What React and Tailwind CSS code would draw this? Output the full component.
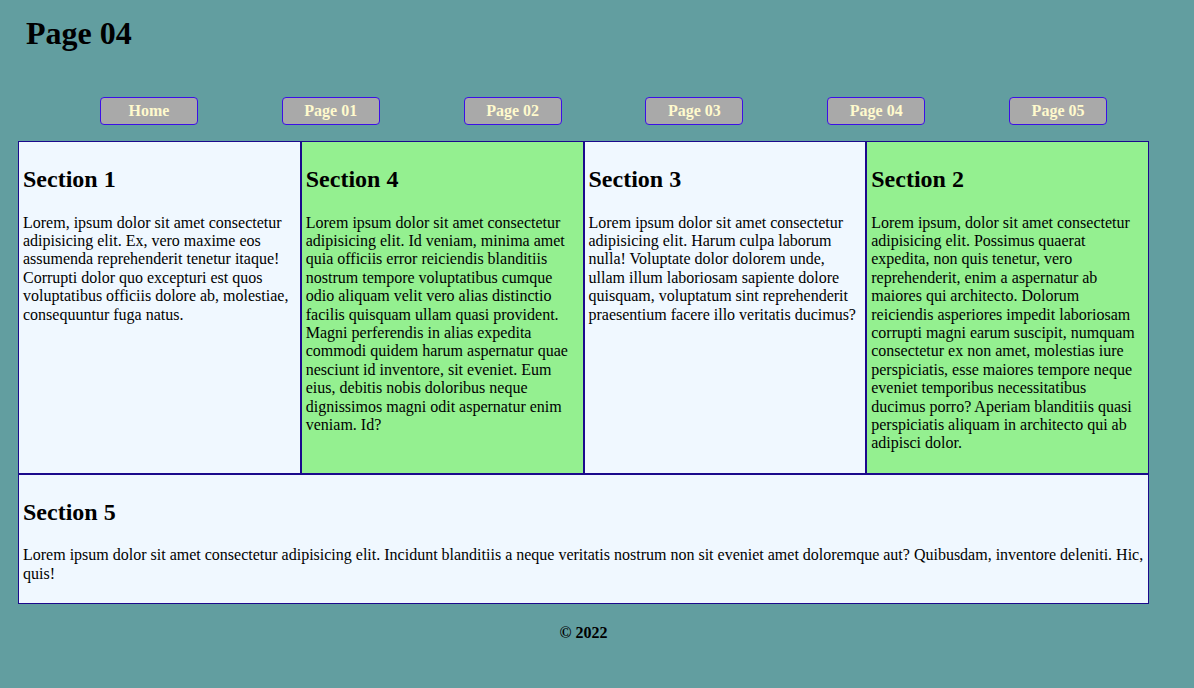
export default function App() {
  const navs = ["Home", "Page 01", "Page 02", "Page 03", "Page 04", "Page 05"];
  const cells = [
    {
      t: "Section 1",
      g: false,
      p: "Lorem, ipsum dolor sit amet consectetur adipisicing elit. Ex, vero maxime eos assumenda reprehenderit tenetur itaque! Corrupti dolor quo excepturi est quos voluptatibus officiis dolore ab, molestiae, consequuntur fuga natus.",
    },
    {
      t: "Section 4",
      g: true,
      p: "Lorem ipsum dolor sit amet consectetur adipisicing elit. Id veniam, minima amet quia officiis error reiciendis blanditiis nostrum tempore voluptatibus cumque odio aliquam velit vero alias distinctio facilis quisquam ullam quasi provident. Magni perferendis in alias expedita commodi quidem harum aspernatur quae nesciunt id inventore, sit eveniet. Eum eius, debitis nobis doloribus neque dignissimos magni odit aspernatur enim veniam. Id?",
    },
    {
      t: "Section 3",
      g: false,
      p: "Lorem ipsum dolor sit amet consectetur adipisicing elit. Harum culpa laborum nulla! Voluptate dolor dolorem unde, ullam illum laboriosam sapiente dolore quisquam, voluptatum sint reprehenderit praesentium facere illo veritatis ducimus?",
    },
    {
      t: "Section 2",
      g: true,
      p: "Lorem ipsum, dolor sit amet consectetur adipisicing elit. Possimus quaerat expedita, non quis tenetur, vero reprehenderit, enim a aspernatur ab maiores qui architecto. Dolorum reiciendis asperiores impedit laboriosam corrupti magni earum suscipit, numquam consectetur ex non amet, molestias iure perspiciatis, esse maiores tempore neque eveniet temporibus necessitatibus ducimus porro? Aperiam blanditiis quasi perspiciatis aliquam in architecto qui ab adipisci dolor.",
    },
  ];
  return (
    <div className="min-h-[688px] bg-[#629ea0] text-black font-['Liberation_Serif',serif] overflow-hidden">
      <h1 className="pt-[15px] pl-[26px] text-[32px] font-bold leading-[36px]">Page 04</h1>
      <nav className="mt-[46px] ml-[58px] w-[1091px] flex justify-around">
        {navs.map((n) => (
          <a
            key={n}
            className="h-[28px] w-[98px] flex items-center justify-center border border-[#3c0fe6] rounded-[4px] bg-[#a9a9a9] text-[#fffacd] text-[16px] font-bold leading-[18.4px]"
          >
            {n}
          </a>
        ))}
      </nav>
      <main className="mt-[16px] ml-[18px] w-[1131px] grid grid-cols-4">
        {cells.map((c) => (
          <section
            key={c.t}
            className={`border border-[#1b0a8c] p-1 ${c.g ? "bg-[#94f090]" : "bg-[#f0f8ff]"}`}
          >
            <h2 className="text-[24px] font-bold leading-[27.6px] my-[20px]">{c.t}</h2>
            <p className="text-[16px] leading-[18.4px] my-4">{c.p}</p>
          </section>
        ))}
        <section className="col-span-4 border border-[#1b0a8c] p-1 bg-[#f0f8ff]">
          <h2 className="text-[24px] font-bold leading-[27.6px] my-[20px]">Section 5</h2>
          <p className="text-[16px] leading-[18.4px] my-4">
            Lorem ipsum dolor sit amet consectetur adipisicing elit. Incidunt blanditiis a neque veritatis nostrum non sit eveniet amet doloremque aut? Quibusdam, inventore deleniti. Hic, quis!
          </p>
        </section>
      </main>
      <footer className="ml-[18px] w-[1131px] mt-[20px] text-center text-[16px] font-bold leading-[18.4px]">
        © 2022
      </footer>
    </div>
  );
}
